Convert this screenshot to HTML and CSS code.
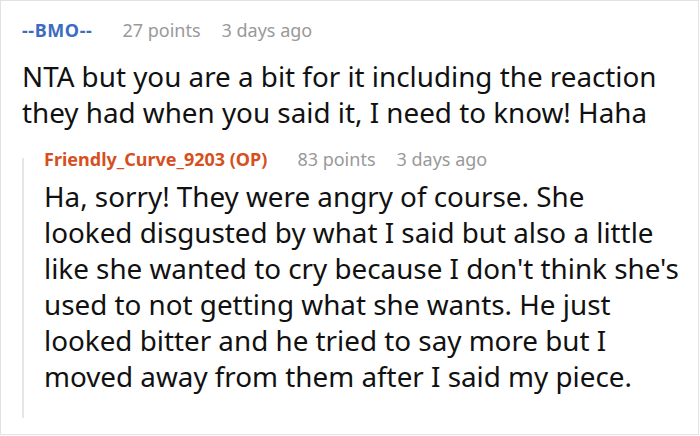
FILE: index.html
```html
<!DOCTYPE html>
<html>
<head>
<meta charset="utf-8">
<link rel="stylesheet" href="styles.css">
</head>
<body>
<div class="card">
  <div class="comment">
    <div class="meta">
      <span class="user user-blue">--BMO--</span>
      <span class="points">27 points</span>
      <span class="time">3 days ago</span>
    </div>
    <p class="body">NTA but you are a bit for it including the reaction<br>they had when you said it, I need to know! Haha</p>
    <div class="reply">
      <div class="rail"></div>
      <div class="reply-content">
        <div class="meta">
          <span class="user user-orange">Friendly_Curve_9203 (OP)</span>
          <span class="points">83 points</span>
          <span class="time">3 days ago</span>
        </div>
        <p class="body">Ha, sorry! They were angry of course. She<br>looked disgusted by what I said but also a little<br>like she wanted to cry because I don't think she's<br>used to not getting what she wants. He just<br>looked bitter and he tried to say more but I<br>moved away from them after I said my piece.</p>
      </div>
    </div>
  </div>
</div>
</body>
</html>
```

FILE: styles.css
```css
* { box-sizing: border-box; }
html, body { margin: 0; padding: 0; background: #fff; }
body { font-family: "Noto Sans", "Open Sans", sans-serif; color: #111; }
.card {
  width: 699px;
  height: 435px;
  border: 1px solid #e2e2e2;
  overflow: hidden;
}
.comment { padding: 15px 10px 0 21px; }
.meta {
  display: flex;
  align-items: baseline;
  white-space: nowrap;
  font-size: 18px;
  line-height: 28px;
  color: #999999;
}
.comment > .meta { margin-bottom: 14px; }
.user { font-weight: 700; margin-right: 30px; }
.user-blue { color: #3b6cbf; letter-spacing: 0.6px; }
.user-orange { color: #d5501e; }
.points { margin-right: 21px; }
.body {
  margin: 0;
  font-size: 27.8px;
  line-height: 36px;
  color: #111;
  white-space: nowrap;
}
.reply {
  display: flex;
  margin-top: 15px;
}
.rail {
  width: 2px;
  margin-top: 13px;
  background: #e6e6e6;
  flex: none;
}
.reply-content {
  padding-left: 20px;
  padding-bottom: 24px;
}
.reply-content > .meta { margin-bottom: 5px; }
```
